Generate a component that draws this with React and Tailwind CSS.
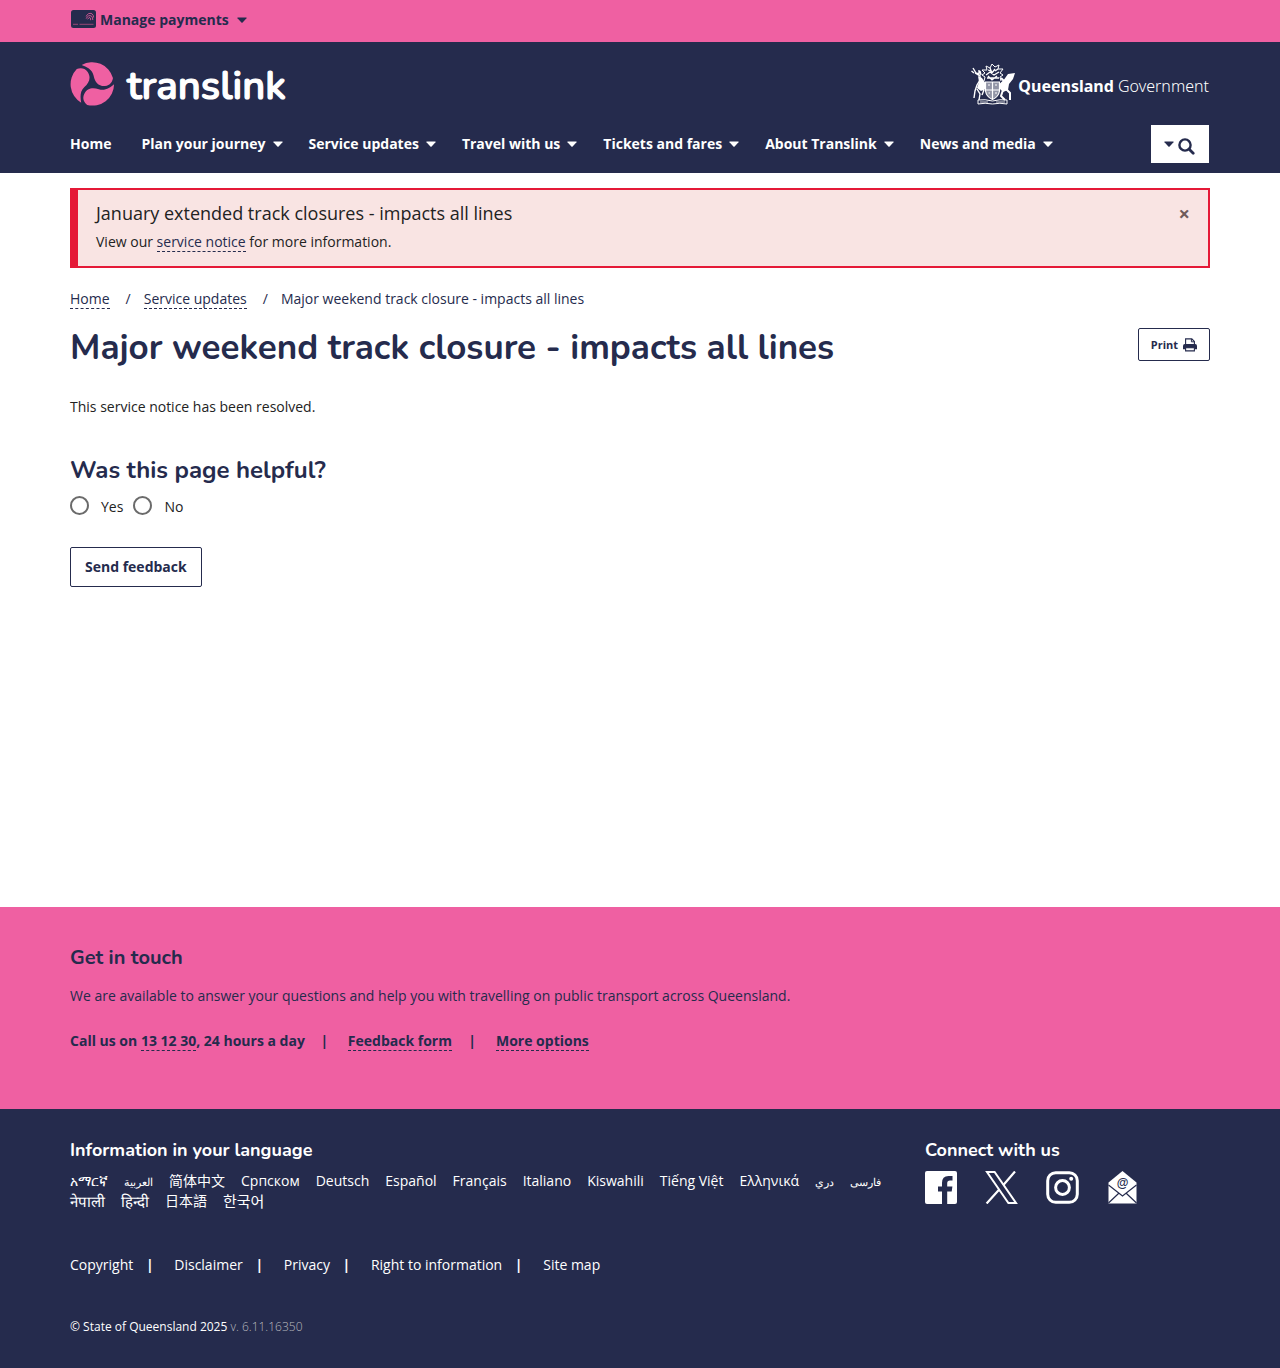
const sans = "font-['Open_Sans','Noto_Sans_CJK_SC',sans-serif]";
const wrap = "mx-auto w-full max-w-[1170px] px-[15px]";
const dashed = "border-b border-dashed border-[#252b4d]";
const heading = "font-['Nunito','Open_Sans',sans-serif]";

function Caret({ className = "" }) {
  return (
    <svg className={className} width="10" height="6" viewBox="0 0 10 6" fill="currentColor" aria-hidden="true">
      <path d="M0.8 0.4H9.2Q10 0.6 9.5 1.3L5.6 5.4Q5 5.9 4.4 5.4L0.5 1.3Q0 0.6 0.8 0.4Z" />
    </svg>
  );
}

function CardIcon() {
  return (
    <svg width="25" height="18" viewBox="0 0 25 18" aria-hidden="true">
      <rect width="25" height="18" rx="2.5" fill="#252b4d" />
      <path d="M2 14.3H7M8.5 14.3H22.5" stroke="#a4487c" strokeWidth="0.9" />
      <g fill="none" stroke="#ef60a2" strokeWidth="0.8">
        <path d="M15.2 6.5Q17 2.2 21 3.8Q22.6 5 22.6 7.5" />
        <path d="M15.2 8.6Q17.5 4.2 20.6 6.2Q21.8 7.5 21.8 10" />
        <path d="M16.6 9.3Q18.2 6.2 19.6 8.2V10.2" />
      </g>
    </svg>
  );
}

const blade = "M-32 -57C-18 -52 0 -44 4 -25C8 -6 18 7 38 6C54 5 61 -8 62 -18A64.5 64.5 0 0 0 -32 -57Z";

function TranslinkLogo() {
  return (
    <svg width="230" height="72" viewBox="0 0 230 72" role="img" aria-label="translink">
      <g transform="translate(22.3 36) scale(0.333)" fill="#ef60a2">
        <path d={blade} />
        <path d={blade} transform="rotate(120)" />
        <path d={blade} transform="rotate(240)" />
      </g>
      <text
        x="57"
        y="51"
        className="font-['Nunito','Open_Sans',sans-serif] text-[40px] font-semibold"
        fill="#fff"
        stroke="#fff"
        strokeWidth="1.2"
        strokeLinejoin="round"
      >
        translink
      </text>
    </svg>
  );
}

function Crest() {
  return (
    <svg width="44" height="42" viewBox="0 0 44 42" fill="none" stroke="#fff" aria-hidden="true">
      <path d="M0.5 8L3 10M2 5L5 10L8 11L8 7M4 10L9 13L9 17L6 22L4 28L3 35M10 12L9 8M6 26L9 31L8 37M8 25L13 27L11 32" strokeWidth="1.4" />
      <path d="M7 13L11 15L15 21L14 26L10 28L6 25L8 19Z" fill="#fff" stroke="none" />
      <path d="M44 10L37 11L32 18L29 21L28 25L32 29L37 27L38 21L42 16Z" fill="#fff" stroke="none" />
      <path d="M35 26L39 30V37M32 27L30 33L34 37M30 15L33 18L29 22" strokeWidth="2" />
      <path d="M14.5 19H28.5V28Q27.5 34 21.5 36.5Q15.5 34 14.5 28Z" strokeWidth="1.2" fill="#fff" fillOpacity="0.5" />
      <path d="M21.5 19V36M15 27H28M17 22H19M24 22H26M17.5 30H19M24 30H26" strokeWidth="1.2" />
      <path d="M13 18L14 14L11 12L14 10L11 7L16 7L15 3L19 5L21 1L24 4L28 2L27 6L32 6L29 10L32 12L29 14L30 18" strokeWidth="1" />
      <path d="M15 12L19 9L23 12L28 9M16 15H28M19 5L21 10L24 6M17 13L21 17L26 13M17 7L20 8M24 8L27 6" strokeWidth="1.3" />
      <path d="M7 37Q14 36 21.5 38Q29 36 36 37V41Q29 39.5 21.5 41Q14 39.5 7 41Z" strokeWidth="1" />
      <path d="M9 39H17M25 39H34" strokeWidth="0.8" />
    </svg>
  );
}

function SearchIcon() {
  return (
    <svg width="17" height="17" viewBox="0 0 17 17" fill="none" stroke="currentColor" aria-hidden="true">
      <circle cx="7" cy="7" r="5.6" strokeWidth="2.4" />
      <path d="M11.2 11.2L15.2 15.2" strokeWidth="2.8" strokeLinecap="round" />
    </svg>
  );
}

function PrintIcon() {
  return (
    <svg width="14" height="14" viewBox="0 0 14 14" aria-hidden="true">
      <path d="M2.6 7V0.9H8.8L11.4 3.5V7" fill="none" stroke="#252b4d" strokeWidth="1.1" />
      <path d="M8.4 1V3.8H11.2" fill="none" stroke="#252b4d" />
      <path d="M1.8 6H12.2Q14 6.2 14 8V11.3H0V8Q0 6.2 1.8 6Z" fill="#252b4d" />
      <path d="M2.6 9.8H11.4V12.9H2.6Z" fill="#fff" stroke="#252b4d" strokeWidth="1.1" />
    </svg>
  );
}

function NavLink({ label, menu = true }) {
  return (
    <a href="#" className="flex items-center gap-[7px]">
      {label}
      {menu && <Caret />}
    </a>
  );
}

function Radio({ label }) {
  return (
    <label className="flex items-center">
      <input
        type="radio"
        name="helpful"
        className="size-[19px] appearance-none rounded-full border-2 border-[#6b6b6b] bg-white checked:border-[6px]"
      />
      <span className="ml-3 pt-1 leading-5">{label}</span>
    </label>
  );
}

function FacebookIcon() {
  return (
    <svg width="32" height="33" viewBox="0 0 32 33" aria-hidden="true">
      <rect width="32" height="33" rx="2" fill="#fff" />
      <path d="M17 33V20.5H13V15.5H17V12Q17 5 23.5 5H27.5V9.6H25Q22.2 9.6 22.2 12.4V15.5H27.4L26.7 20.5H22.2V33Z" fill="#252b4d" />
    </svg>
  );
}

function XIcon() {
  return (
    <svg width="33" height="33" viewBox="0 0 33 33" fill="none" stroke="#fff" aria-hidden="true">
      <path d="M2 1H9.6L31 32H23.4Z" strokeWidth="2" />
      <path d="M30 0.5L18.4 14M14 18.8L1.6 32.5" strokeWidth="2.2" />
    </svg>
  );
}

function InstagramIcon() {
  return (
    <svg width="33" height="33" viewBox="0 0 33 33" fill="none" stroke="#fff" strokeWidth="3" aria-hidden="true">
      <rect x="1.7" y="1.7" width="29.6" height="29.6" rx="8" />
      <circle cx="16.5" cy="16.5" r="6.9" />
      <circle cx="25.2" cy="7.8" r="2" fill="#fff" stroke="none" />
    </svg>
  );
}

function MailIcon() {
  return (
    <svg width="29" height="33" viewBox="0 0 29 33" aria-hidden="true">
      <path d="M14.5 0L28.5 11.5V32.5H0.5V11.5Z" fill="#fff" />
      <path d="M0.5 14L14.5 25L28.5 14M0.5 32L10.8 22.3M28.5 32L18.2 22.3" fill="none" stroke="#252b4d" strokeWidth="1.2" />
      <text x="14.5" y="16" textAnchor="middle" className="font-['Liberation_Sans',sans-serif] text-[12px] font-bold" fill="#252b4d">@</text>
    </svg>
  );
}

const small = "text-[11px]";
const large = "text-[15px]";

const languages = [
  ["አማርኛ"], ["العربية", small], ["简体中文"], ["Српском"], ["Deutsch"], ["Español"], ["Français"], ["Italiano"],
  ["Kiswahili"], ["Tiếng Việt"], ["Ελληνικά"], ["دري", small], ["فارسی", small], ["नेपाली", large], ["हिन्दी", large],
  ["日本語"], ["한국어", large],
];

const footerLinks = ["Copyright", "Disclaimer", "Privacy", "Right to information", "Site map"];

export default function App() {
  return (
    <div className={`${sans} flex min-h-screen flex-col bg-white text-[14px] leading-5 text-[#252b4d]`}>
      <div className="bg-[#ef60a2]">
        <div className={`${wrap} flex h-[42px] items-center pb-[3px]`}>
          <button type="button" className="flex items-center font-bold">
            <span className="ml-px mr-1 pb-0.5"><CardIcon /></span>
            Manage payments
            <Caret className="ml-2" />
          </button>
        </div>
      </div>

      <header className="bg-[#252b4d] text-white">
        <div className={`${wrap} flex h-[83px] items-center justify-between`}>
          <a href="#"><TranslinkLogo /></a>
          <a href="#" className="flex items-center gap-[3px] pr-px">
            <Crest />
            <span className="whitespace-nowrap pt-1 font-['Noto_Sans',sans-serif] text-[16px]">
              <b>Queensland</b> <span className="font-light">Government</span>
            </span>
          </a>
        </div>
        <div className={`${wrap} flex h-[48px] items-start justify-between`}>
          <nav className="flex h-[38px] items-center gap-[26px] whitespace-nowrap font-bold">
            <span className="mr-1"><NavLink label="Home" menu={false} /></span>
            <NavLink label="Plan your journey" />
            <NavLink label="Service updates" />
            <NavLink label="Travel with us" />
            <NavLink label="Tickets and fares" />
            <NavLink label="About Translink" />
            <NavLink label="News and media" />
          </nav>
          <button type="button" aria-label="Search" className="mr-px flex h-[38px] w-[58px] items-center justify-center gap-1 bg-white pr-0.5 text-[#252b4d]">
            <Caret />
            <span className="pt-1"><SearchIcon /></span>
          </button>
        </div>
      </header>

      <main className={`${wrap} grow pt-[15px]`}>
        <div role="alert" className="flex h-20 items-start justify-between border-2 border-l-8 border-[#e51937] bg-[#f9e4e3] py-[11px] pl-[18px] pr-[18px] text-[#222]">
          <div>
            <h2 className="text-[18px] leading-6">January extended track closures - impacts all lines</h2>
            <p className="mt-[7px]">
              View our <a href="#" className={`${dashed} text-[#252b4d]`}>service notice</a> for more information.
            </p>
          </div>
          <button type="button" aria-label="Close" className="pt-[3px] text-[20px] font-bold text-[#6e5b5b]">×</button>
        </div>

        <nav aria-label="Breadcrumb" className="mt-[21px] flex">
          <a href="#" className={`${dashed} leading-[19px]`}>Home</a>
          <span className="pl-4 pr-[13px]">/</span>
          <a href="#" className={`${dashed} leading-[19px]`}>Service updates</a>
          <span className="pl-4 pr-[13px]">/</span>
          <span>Major weekend track closure - impacts all lines</span>
        </nav>

        <div className="mt-[19px] flex items-start justify-between">
          <h1 className={`${heading} text-[35px] font-bold leading-10`}>Major weekend track closure - impacts all lines</h1>
          <button type="button" className="flex h-[33px] items-center gap-[5px] rounded-[2px] border border-[#252b4d] px-3 text-[11px] font-bold">
            Print <PrintIcon />
          </button>
        </div>

        <p className="mt-[29px] text-[#222]">This service notice has been resolved.</p>

        <form className="mt-[38px]">
          <fieldset>
            <legend className={`${heading} text-[24px] font-bold leading-[30px]`}>Was this page helpful?</legend>
            <div className="mt-2 flex gap-[10px] text-[#222]">
              <Radio label="Yes" />
              <Radio label="No" />
            </div>
          </fieldset>
          <button type="button" className="mt-[30px] h-10 rounded-[2px] border border-[#252b4d] px-[14px] font-bold">Send feedback</button>
        </form>
      </main>

      <section className="bg-[#ef60a2]">
        <div className={`${wrap} h-[202px] pt-[38px]`}>
          <h2 className={`${heading} text-[20px] font-bold leading-[26px]`}>Get in touch</h2>
          <p className="mt-[15px]">We are available to answer your questions and help you with travelling on public transport across Queensland.</p>
          <p className="mt-[25px] flex font-bold">
            <span>Call us on <a href="#" className={dashed}>13 12 30</a>, 24 hours a day</span>
            <span className="w-[43px] pr-1 text-center">|</span>
            <span><a href="#" className={dashed}>Feedback form</a></span>
            <span className="w-[44px] pr-1 text-center">|</span>
            <span><a href="#" className={dashed}>More options</a></span>
          </p>
        </div>
      </section>

      <footer className="bg-[#252b4d] text-white">
        <div className={`${wrap} h-[259px] pt-[29px]`}>
          <div className="flex h-[117px]">
            <div className="w-3/4">
              <h2 className={`${heading} text-[18px] font-bold leading-6`}>Information in your language</h2>
              <ul className="mt-[9px] flex max-w-[825px] flex-wrap gap-x-4">
                {languages.map(([name, size = ""]) => (
                  <li key={name} className="h-5"><a href="#" className={size}>{name}</a></li>
                ))}
              </ul>
            </div>
            <div>
              <h2 className={`${heading} text-[18px] font-bold leading-6`}>Connect with us</h2>
              <div className="mt-[9px] flex">
                <a href="#" aria-label="Facebook" className="w-[60px]"><FacebookIcon /></a>
                <a href="#" aria-label="X" className="w-[61px]"><XIcon /></a>
                <a href="#" aria-label="Instagram" className="w-[62px]"><InstagramIcon /></a>
                <a href="#" aria-label="Email"><MailIcon /></a>
              </div>
            </div>
          </div>
          <ul className="flex">
            {footerLinks.map((name, i) => (
              <li key={name} className="flex">
                <a href="#">{name}</a>
                {i < footerLinks.length - 1 && <span className="w-[41px] pr-2 text-center font-bold">|</span>}
              </li>
            ))}
          </ul>
          <p className="mt-[42px] text-[12px]">
            © State of Queensland 2025 <span className="font-light text-[#b9babf]">v. 6.11.16350</span>
          </p>
        </div>
      </footer>
    </div>
  );
}
